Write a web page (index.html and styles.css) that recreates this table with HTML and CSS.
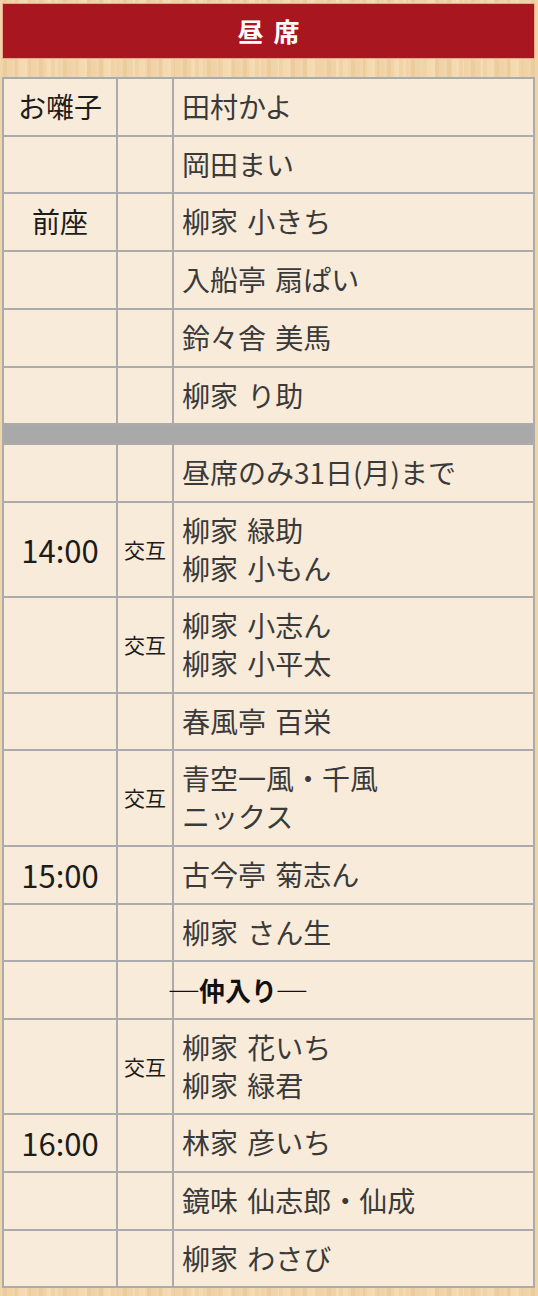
FILE: index.html
```html
<!DOCTYPE html>
<html lang="ja">
<head>
<meta charset="utf-8">
<title>昼席</title>
<link rel="stylesheet" href="styles.css">
</head>
<body>
<div class="page">
  <h2 class="title">昼席</h2>
  <table class="prog">
    <colgroup>
      <col class="c-time">
      <col class="c-mark">
      <col class="c-name">
    </colgroup>
    <tbody>
      <tr><td class="time">お囃子</td><td class="mark"></td><td class="name">田村かよ</td></tr>
      <tr><td class="time"></td><td class="mark"></td><td class="name">岡田まい</td></tr>
      <tr><td class="time">前座</td><td class="mark"></td><td class="name">柳家 小きち</td></tr>
      <tr><td class="time"></td><td class="mark"></td><td class="name">入船亭 扇ぱい</td></tr>
      <tr><td class="time"></td><td class="mark"></td><td class="name">鈴々舎 美馬</td></tr>
      <tr><td class="time"></td><td class="mark"></td><td class="name">柳家 り助</td></tr>
      <tr class="sep"><td colspan="3"></td></tr>
      <tr><td class="time"></td><td class="mark"></td><td class="name">昼席のみ31日(月)まで</td></tr>
      <tr><td class="time num">14:00</td><td class="mark">交互</td><td class="name">柳家 緑助<br>柳家 小もん</td></tr>
      <tr><td class="time"></td><td class="mark">交互</td><td class="name">柳家 小志ん<br>柳家 小平太</td></tr>
      <tr><td class="time"></td><td class="mark"></td><td class="name">春風亭 百栄</td></tr>
      <tr><td class="time"></td><td class="mark">交互</td><td class="name">青空一風・千風<br>ニックス</td></tr>
      <tr><td class="time num">15:00</td><td class="mark"></td><td class="name">古今亭 菊志ん</td></tr>
      <tr><td class="time"></td><td class="mark"></td><td class="name">柳家 さん生</td></tr>
      <tr><td class="time"></td><td class="mark"></td><td class="name"><span class="break"><span class="dash">―</span>仲入り<span class="dash">―</span></span></td></tr>
      <tr><td class="time"></td><td class="mark">交互</td><td class="name">柳家 花いち<br>柳家 緑君</td></tr>
      <tr><td class="time num">16:00</td><td class="mark"></td><td class="name">林家 彦いち</td></tr>
      <tr><td class="time"></td><td class="mark"></td><td class="name">鏡味 仙志郎・仙成</td></tr>
      <tr><td class="time"></td><td class="mark"></td><td class="name">柳家 わさび</td></tr>
    </tbody>
  </table>
</div>
</body>
</html>
```

FILE: styles.css
```css
html, body {
  margin: 0;
  padding: 0;
}
body {
  background-color: #f2d5a8;
  background-image:
    repeating-linear-gradient(90deg, rgba(255,255,255,0.10) 0px, rgba(255,255,255,0.10) 3px, rgba(200,150,90,0.08) 3px, rgba(200,150,90,0.08) 7px, rgba(255,255,255,0.05) 7px, rgba(255,255,255,0.05) 12px),
    repeating-linear-gradient(90deg, rgba(190,140,80,0.06) 0px, rgba(190,140,80,0.06) 17px, rgba(255,240,210,0.10) 17px, rgba(255,240,210,0.10) 29px);
  font-family: "Noto Sans CJK JP", "Noto Sans", sans-serif;
  color: #333;
}
.page {
  padding: 3px 3px 8px 2px;
}
.title {
  margin: 0;
  height: 54px;
  background: #a8161f;
  border: 1px solid #e9a88a;
  color: #fff;
  font-size: 26px;
  font-weight: 700;
  line-height: 54px;
  text-align: center;
  letter-spacing: 10px;
  text-indent: 10px;
}
.prog {
  margin-top: 18px;
  width: 533px;
  border-collapse: collapse;
  table-layout: fixed;
  background: #f9ebd9;
}
.c-time { width: 114px; }
.c-mark { width: 56px; }
.prog td {
  border: 2px solid #ababab;
  padding: 9px 0;
  font-size: 28px;
  line-height: 37.7px;
  vertical-align: middle;
}
.prog td.time {
  text-align: center;
  color: #1c1c1c;
}
.prog td.num {
  font-size: 31px;
}
.prog td.mark {
  text-align: center;
  font-size: 21px;
  color: #1c1c1c;
}
.prog td.name {
  padding-left: 8px;
  color: #3a3a3a;
  word-spacing: 3px;
}
.prog tr.sep td {
  padding: 0;
  height: 18px;
  background: #a9a9a9;
  line-height: 0;
}
.break {
  display: inline-block;
  margin-left: -13px;
  font-weight: 700;
  font-size: 26px;
  color: #111;
}
.dash {
  display: inline-block;
  transform: scaleX(1.3);
  margin: 0 2px;
}
```
